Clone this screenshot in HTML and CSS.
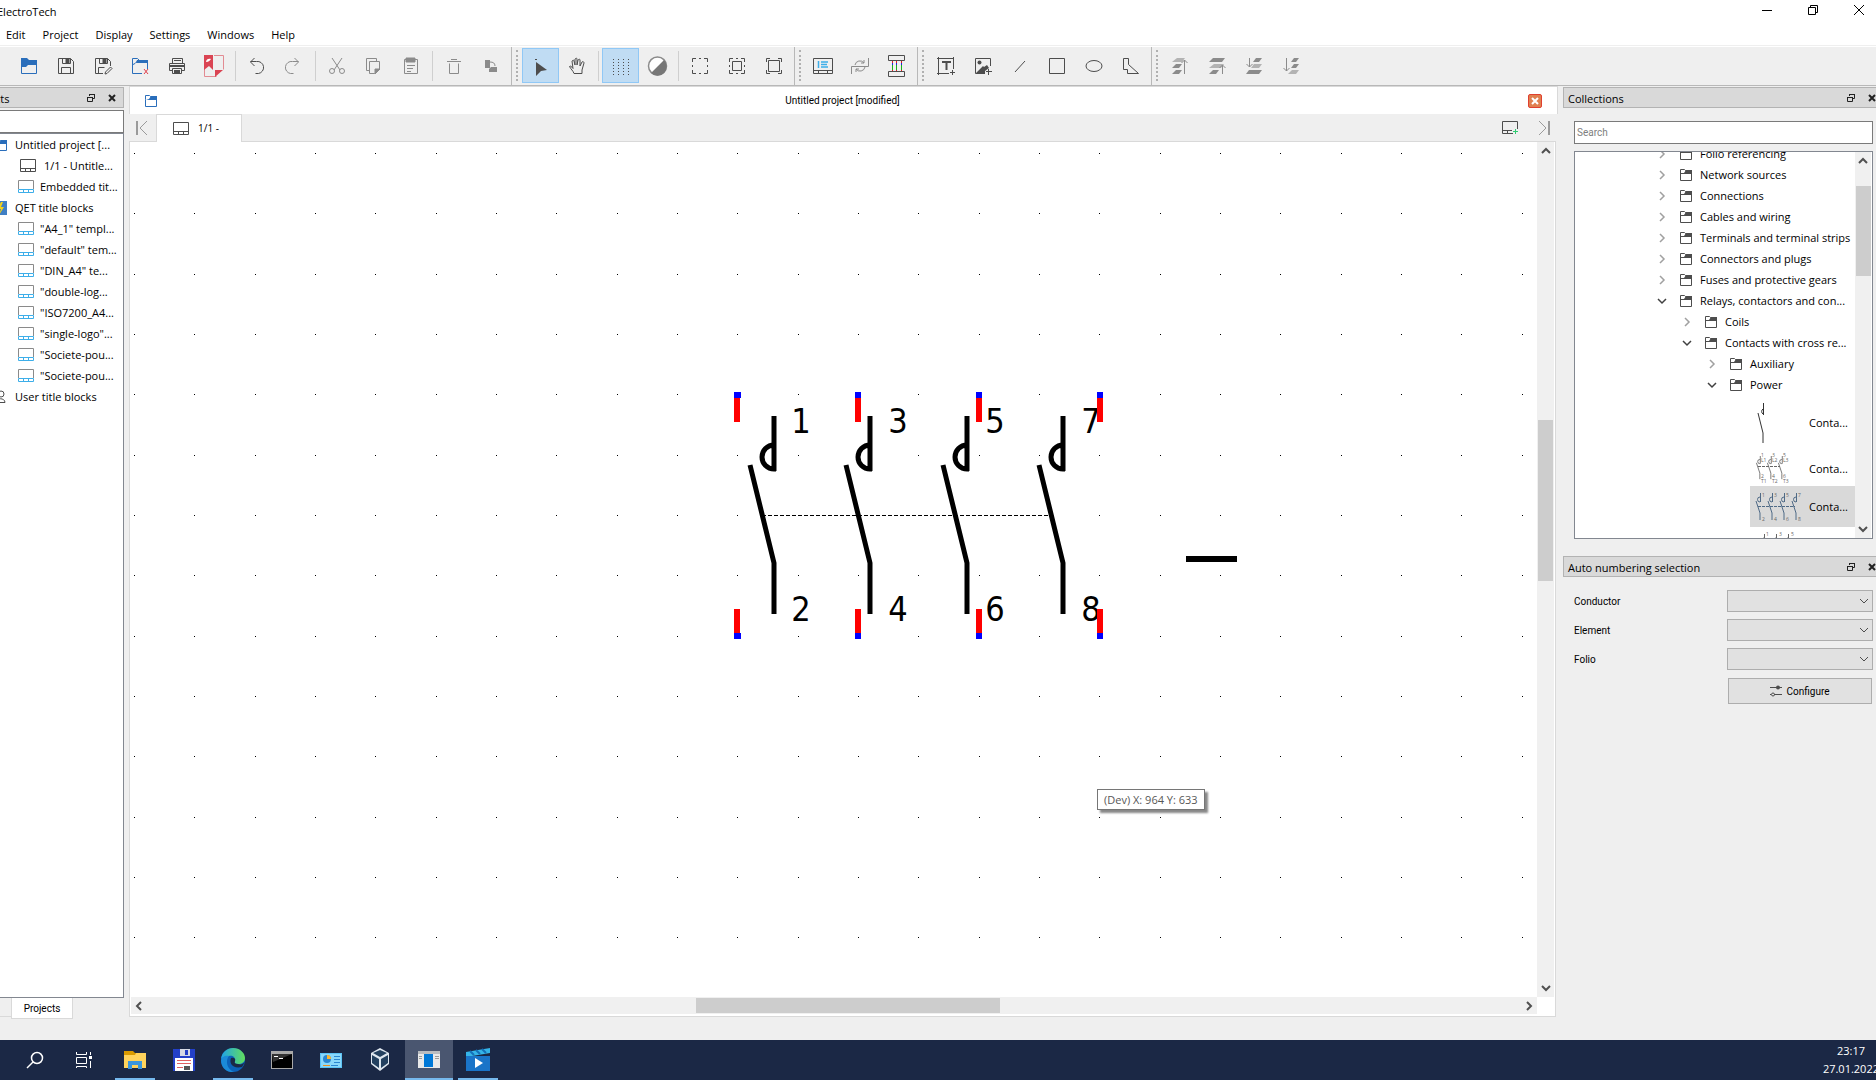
FILE: index.html
```html
<!DOCTYPE html>
<html lang="en">
<head>
  <meta charset="UTF-8" />
  <meta name="viewport" content="width=device-width, initial-scale=1.0" />
  <title>ElectroTech</title>
  <link rel="stylesheet" href="styles.css">
</head>
<body>
  <!-- shared icons -->
  <svg class="defs" aria-hidden="true">
    <symbol id="folder" viewBox="0 0 12 12">
      <path d="M.5 .5h4l1 1h6v10H.5zM.5 4.500h11" fill="none" stroke="currentColor"/>
      <path d="M4 4l2-3h6v3z" fill="currentColor"/>
    </symbol>
    <symbol id="folder-blue" viewBox="0 0 12 12">
      <path d="M.5 4.500V.5h4l1 1h6v10H.5z" fill="none" stroke="#2a6ebb"/>
      <path d="M1 5l3-1 2-3h6v4z" fill="#2a6ebb"/>
    </symbol>
    <symbol id="sheet" viewBox="0 0 16 14">
      <path d="M.5 .5h15v12H.5zM.5 9.500h15M5.500 10v2M10.500 10v2" fill="none" stroke="#4d4d4d"/>
    </symbol>
    <symbol id="template" viewBox="0 0 16 14">
      <path d="M.5 9V.5h15V9" fill="none" stroke="#8a8a8a"/>
      <path d="M.5 9.500h15v3H.5zM5.500 10v2M10.500 10v2" fill="none" stroke="#3daee9"/>
    </symbol>
    <symbol id="float" viewBox="0 0 10 10">
      <path d="M3.500 3V1.500h5v4H7M1.500 4.500h5v4h-5z" fill="none" stroke="#222"/>
      <path d="M3 1h6v1H3zM1 4h6v1H1z" fill="#222"/>
    </symbol>
    <symbol id="cross" viewBox="0 0 10 10">
      <path d="M2 2l6 6M8 2L2 8" stroke="#222" stroke-width="2"/>
    </symbol>
    <symbol id="right" viewBox="0 0 10 10">
      <path d="M3 1l4 4-4 4" fill="none" stroke="currentColor" stroke-width="1.500"/>
    </symbol>
    <symbol id="down" viewBox="0 0 10 10">
      <path d="M1 3l4 4 4-4" fill="none" stroke="currentColor" stroke-width="1.500"/>
    </symbol>
    <symbol id="pole" viewBox="-30 270 40 210" overflow="visible">
      <path d="M0 274v55M2 303h-2a12 12 0 0 0 0 24h2M-24 323L0 421v51" fill="none" stroke="currentColor" stroke-width="5"/>
    </symbol>
    <symbol id="mini" viewBox="0 0 8 28">
      <path d="M5.500 0v9M5 4a2 2 0 0 0 0 5" fill="none" stroke="currentColor"/>
      <path d="M1 8l4 12v7" fill="none" stroke="currentColor"/>
    </symbol>
  </svg>

  <header class="titlebar">
    <span class="title">ElectroTech</span>
    <div class="window-buttons">
      <button aria-label="Minimize"><svg width="10" height="10"><path d="M0 5.500h10"/></svg></button>
      <button aria-label="Restore"><svg width="10" height="10"><path d="M.5 2.500h7v7h-7zM2.500 2V.5h7v7H8"/></svg></button>
      <button aria-label="Close"><svg width="10" height="10"><path d="M0 0l10 10M10 0L0 10"/></svg></button>
    </div>
  </header>

  <nav class="menubar">
    <a href="#">Edit</a>
    <a href="#">Project</a>
    <a href="#">Display</a>
    <a href="#">Settings</a>
    <a href="#">Windows</a>
    <a href="#">Help</a>
  </nav>

  <div class="toolbar">
    <div class="group first">
      <button aria-label="New"><svg><path d="M4.500 9.500v10h15v-10" stroke="#2a6ebb"/><path d="M4 4h6l2 2h8v5h-9l-2 2H4z" fill="#2a6ebb" stroke="none"/></svg></button>
      <button aria-label="Save"><svg><path d="M4.500 4.500h12l3 3v12h-15zM8.500 4.500v5h8v-5M7.500 19.500v-6h9v6"/><path d="M12 5h3v4h-3z" fill="#4d4d4d"/></svg></button>
      <button aria-label="Save as"><svg><path d="M12 19.500H4.500v-15h12l3 3V12M8.500 4.500v5h8v-5M7.500 19.500v-6h6"/><path d="M12 5h3v4h-3z" fill="#4d4d4d"/><path d="M14.500 18l5-5 1.500 1.500-5 5-2 .5z"/></svg></button>
      <button aria-label="Close project"><svg><path d="M14 19.500H4.500v-15h5l2 2h8V15M5 10.500l2-1 3-3" stroke="#2a6ebb"/><path d="M9 6h11v3H8z" fill="#2a6ebb" stroke="none"/><path d="M16 15l4 5M20 15l-4 5" stroke="#e0404c"/></svg></button>
      <button aria-label="Print"><svg><path d="M7.500 9V4.500h10V9M4.500 9.500h15v7h-15z"/><path d="M4 11h16v2H4zM9 6h7v1H9z" fill="#4d4d4d" stroke="none"/><path d="M7.500 14.500h9v5h-9z" fill="#efefef"/><path d="M9 16h6v3H9z" fill="#4d4d4d" stroke="none"/></svg></button>
      <button aria-label="Export PDF"><svg><path d="M12 1.500h9.500v14M2.500 15v7.500h12" stroke="#e28b92"/><path d="M2 1h9v15l-4-4-5 4zM13 16h8l-8 7z" fill="#da4453" stroke="none"/><path d="M4 8c0-3 3-4 5-3-1 1-2 3-5 3z" fill="#fff" stroke="none"/></svg></button>
      <i class="sep"></i>
      <button aria-label="Undo"><svg><path d="M9.500 4L5.500 8l4 4M5.500 7.500h6a6 6 0 0 1 2 12h-3" /></svg></button>
      <button aria-label="Redo" class="off"><svg><path d="M12.500 4l4 4-4 4M16.500 7.500h-6a6 6 0 0 0-2 12h3" /></svg></button>
      <i class="sep"></i>
      <button aria-label="Cut" class="off"><svg><path d="M7 4l8 12M17 4L9 16"/><circle cx="7" cy="17" r="2.500"/><circle cx="17" cy="17" r="2.500"/></svg></button>
      <button aria-label="Copy" class="off"><svg><path d="M7 16.500H4.500v-12h10V7M7.500 7.500h10V15l-5 4.500h-5z"/><path d="M13 15h5l-5 5z" fill="#8b8b8b"/></svg></button>
      <button aria-label="Paste" class="off"><svg><path d="M5.500 5.500h13v14h-13zM8 11.500h8M8 14.500h6M8 17.500h4"/><path d="M7 4h9v4H7z" fill="#8b8b8b"/></svg></button>
      <i class="sep"></i>
      <button aria-label="Delete" class="off"><svg><path d="M5 7.500h14M9 5.500h6M7.500 9.500v10h9v-10"/></svg></button>
      <button aria-label="Rotate" class="off"><svg><path d="M6 6h5v8H6zM12 13h6v5h-8v-3z" fill="#8b8b8b" stroke="none"/><path d="M11 8c3 0 5 1 5 4"/></svg></button>
    </div>

    <div class="group">
      <button aria-label="Select" class="on"><svg><path d="M8 8l11 8-6 1-5 5z" fill="#4d4d4d" stroke="none"/><path d="M7 5.500h2"/></svg></button>
      <button aria-label="Pan"><svg><path d="M9 19.500c-1-3-3-4-4.500-7 1-1 2 0 3.500 2L7 7c1-1 2-1 2 0l1 4V5c1-1 2-1 2 0v6l1-5c1-1 2-1 2 0v6l2-4c1-1 2 0 2 1l-2 7v3.500z"/></svg></button>
      <i class="sep"></i>
      <button aria-label="Grid" class="on"><svg><path d="M5.500 5v16M10.500 5v16M15.500 5v16M20.500 5v16" stroke-dasharray="1 2"/></svg></button>
      <button aria-label="Background"><svg><circle cx="12.500" cy="12" r="9" fill="#fff" stroke="#8b8b8b" stroke-width="1.500"/><path d="M19 6a9 9 0 0 1-13 13z" fill="#777" stroke="none"/></svg></button>
      <i class="sep"></i>
      <button aria-label="Select none"><svg><path d="M4.500 8V4.500H8M16 4.500h3.500V8M19.500 16v3.500H16M8 19.500H4.500V16M11 4.500h2M11 19.500h2M4.500 11v2M19.500 11v2"/></svg></button>
      <button aria-label="Invert selection"><svg><path d="M4.500 8V4.500H8M16 4.500h3.500V8M19.500 16v3.500H16M8 19.500H4.500V16M11 4.500h2M11 19.500h2M4.500 11v2M19.500 11v2M7.500 7.500h9v9h-9z"/></svg></button>
      <button aria-label="Select all"><svg><path d="M4.500 8V4.500H8M16 4.500h3.500V8M19.500 16v3.500H16M8 19.500H4.500V16M6.500 6.500h11v11h-11z"/></svg></button>
    </div>

    <div class="group">
      <button aria-label="Folio properties"><svg><path d="M2.500 4.500h19v15h-19zM3 16.500h18M7.500 17v2M16.500 17v2"/><path d="M7.500 7v7M10 8h7M10 10.500h6M10 13h7" stroke="#3daee9" stroke-width="1.500"/></svg></button>
      <button aria-label="Reset conductor" class="off"><svg><path d="M3.500 20v-7.500h17V4"/><path d="M7 11a5 5 0 0 1 9-2M17 13a5 5 0 0 1-9 2M16 6v3h-3M8 18v-3h3"/></svg></button>
      <button aria-label="Terminal strip"><svg><path d="M3.500 1.500h16v5h-16zM3.500 17.500h16v5h-16z"/><path d="M7.500 7v10M11.500 7v10M16.500 7v10" stroke="#e02020"/><path d="M7.500 9v6M11.500 9v6M16.500 9v6" stroke="#2020e0"/><path d="M7.500 11v5M11.500 11v5M16.500 11v5" stroke="#18b018"/></svg></button>
    </div>

    <div class="group">
      <button aria-label="Add text"><svg><path d="M3 4.500h17M4.500 3v18M19.500 3v12M3 19.500h12M16 18.500h5M18.500 16v5"/><path d="M8 8h9M12.500 8v8" stroke-width="2"/></svg></button>
      <button aria-label="Add picture"><svg><path d="M19.500 12V4.500h-15v15H14M15 17.500h6M17.500 15v6"/><path d="M5 19l7-7 1 1 3-2 2 3-4 3v2z" fill="#4d4d4d" stroke="none"/><circle cx="8.500" cy="8.500" r="2" fill="#4d4d4d" stroke="none"/></svg></button>
      <button aria-label="Add line"><svg><path d="M7 18L17 7"/></svg></button>
      <button aria-label="Add rectangle"><svg><path d="M4.500 4.500h15v15h-15z"/></svg></button>
      <button aria-label="Add ellipse"><svg><ellipse cx="12" cy="12" rx="8" ry="5.500"/></svg></button>
      <button aria-label="Add polygon"><svg><path d="M4.500 4.500h5v6l10 9h-11v-4h-4z"/></svg></button>
    </div>

    <div class="group last">
      <button aria-label="Bring to front" class="off"><svg fill="#8b8b8b"><path d="M9 4h8l-3 4H4z" opacity=".6" stroke="none"/><path d="M8 10h6l-3 4H4zM8 16h6l-3 4H4z" stroke="none"/><path d="M16.500 20V6M13.500 9l3-3 3 3" fill="none"/></svg></button>
      <button aria-label="Raise" class="off"><svg fill="#8b8b8b"><path d="M9 10h10l-3 4H4z" opacity=".6" stroke="none"/><path d="M8 4h12l-3 4H4zM8 16h6l-3 4H4z" stroke="none"/><path d="M17.500 20v-9M14.500 14l3-3 3 3" fill="none"/></svg></button>
      <button aria-label="Lower" class="off"><svg fill="#8b8b8b"><path d="M12 10h8l-3 4H9z" opacity=".6" stroke="none"/><path d="M14 4h6l-3 4h-6zM7 16h13l-3 4H4z" stroke="none"/><path d="M7.500 4v9M4.500 10l3 3 3-3" fill="none"/></svg></button>
      <button aria-label="Send to back" class="off"><svg fill="#8b8b8b"><path d="M13 16h7l-3 4H9z" opacity=".6" stroke="none"/><path d="M15 4h5l-3 4h-5zM15 10h5l-3 4h-5z" stroke="none"/><path d="M7.500 4v13M4.500 14l3 3 3-3" fill="none"/></svg></button>
    </div>
  </div>

  <main class="workspace">
    <aside class="projects">
      <div class="dock-head cut">
        <h2>cts</h2>
        <svg width="10" height="10"><use href="#float"/></svg>
        <svg width="10" height="10"><use href="#cross"/></svg>
      </div>
      <input class="filter" type="text" aria-label="Filter projects">
      <ul class="project-list">
        <li class="root"><svg width="12" height="12"><use href="#folder-blue"/></svg>Untitled project [...</li>
        <li class="folio"><svg width="16" height="14"><use href="#sheet"/></svg>1/1 - Untitle...</li>
        <li><svg width="16" height="14"><use href="#template"/></svg>Embedded tit...</li>
        <li class="root"><svg width="12" height="14"><path d="M0 0h12v14H0z" fill="#3f7fc4"/><path d="M6 1L2 8h4l-2 6 5-8H6l2-5z" fill="#f2d21b"/></svg>QET title blocks</li>
        <li><svg width="16" height="14"><use href="#template"/></svg>"A4_1" templ...</li>
        <li><svg width="16" height="14"><use href="#template"/></svg>"default" tem...</li>
        <li><svg width="16" height="14"><use href="#template"/></svg>"DIN_A4" te...</li>
        <li><svg width="16" height="14"><use href="#template"/></svg>"double-log...</li>
        <li><svg width="16" height="14"><use href="#template"/></svg>"ISO7200_A4...</li>
        <li><svg width="16" height="14"><use href="#template"/></svg>"single-logo"...</li>
        <li><svg width="16" height="14"><use href="#template"/></svg>"Societe-pou...</li>
        <li><svg width="16" height="14"><use href="#template"/></svg>"Societe-pou...</li>
        <li class="root"><svg width="12" height="14"><circle cx="6" cy="4" r="3" fill="none" stroke="#4d4d4d"/><path d="M1 12.500c0-5 9-5 9 0z" fill="none" stroke="#4d4d4d"/></svg>User title blocks</li>
      </ul>
      <div class="dock-tabs"><i></i><button>Projects</button></div>
    </aside>

    <section class="editor">
      <div class="project-head">
        <svg width="12" height="12"><use href="#folder-blue"/></svg>
        <span>Untitled project [modified]</span>
        <button class="close-project" aria-label="Close project"><svg width="8" height="8"><path d="M1 1l6 6M7 1L1 7" stroke="#fff" stroke-width="2"/></svg></button>
      </div>
      <div class="folio-tabs">
        <button class="jump" aria-label="First folio"><svg width="12" height="16"><path d="M1 1v14" stroke-width="2"/><path d="M11 1L4 8l7 7"/></svg></button>
        <button class="folio-tab"><svg width="16" height="14"><use href="#sheet"/></svg>1/1 -</button>
        <span class="fill"></span>
        <button class="add" aria-label="Add folio"><svg width="17" height="14"><path d="M11 12.500H.5V.5h15V8M.5 9.500H10M5.500 10v2" stroke="#4d4d4d"/><path d="M11 10.500h5M13.500 8v5" stroke="#2ecc71"/></svg></button>
        <button class="jump" aria-label="Last folio"><svg width="12" height="16"><path d="M11 1v14" stroke-width="2"/><path d="M1 1l7 7-7 7"/></svg></button>
      </div>
      <div class="view">
        <div class="canvas">
          <svg class="drawing">
            <defs>
              <pattern id="grid" x="3" y="11" width="181" height="181" patternUnits="userSpaceOnUse">
                <path d="M0 .5h1M60 .5h1M121 .5h1M0 60.500h1M60 60.500h1M121 60.500h1M0 121.500h1M60 121.500h1M121 121.500h1" stroke="#000"/>
              </pattern>
            </defs>
            <rect width="100%" height="100%" fill="url(#grid)"/>
            <path d="M631 373.500h288" stroke="#000" stroke-dasharray="4 2"/>
            <use href="#pole" x="613" y="270" width="40" height="210"/>
            <use href="#pole" x="709" y="270" width="40" height="210"/>
            <use href="#pole" x="806" y="270" width="40" height="210"/>
            <use href="#pole" x="902" y="270" width="40" height="210"/>
            <g class="marks">
              <text x="670" y="291">1</text><text x="670" y="479">2</text>
              <text x="767" y="291">3</text><text x="767" y="479">4</text>
              <text x="864" y="291">5</text><text x="864" y="479">6</text>
              <text x="960" y="291">7</text><text x="960" y="479">8</text>
            </g>
            <path d="M606 256v24M727 256v24M848 256v24M969 256v24M606 467v24M727 467v24M848 467v24M969 467v24" stroke="#f00" stroke-width="6"/>
            <path d="M603 253h7M724 253h6M845 253h6M966 253h6M603 494h7M724 494h6M845 494h6M966 494h6" stroke="#00f" stroke-width="6"/>
            <path d="M1055 417h51" stroke="#000" stroke-width="6"/>
          </svg>
          <div class="tooltip">(Dev) X: 964 Y: 633</div>
        </div>
        <div class="vbar">
          <svg width="10" height="10"><path d="M1 7l4-4 4 4"/></svg>
          <i></i>
          <svg width="10" height="10"><path d="M1 3l4 4 4-4"/></svg>
        </div>
        <div class="hbar">
          <svg width="10" height="10"><path d="M7 1L3 5l4 4"/></svg>
          <i></i>
          <svg width="10" height="10"><path d="M3 1l4 4-4 4"/></svg>
        </div>
      </div>
    </section>

    <aside class="side">
      <div class="dock-head">
        <h2>Collections</h2>
        <svg width="10" height="10"><use href="#float"/></svg>
        <svg width="10" height="10"><use href="#cross"/></svg>
      </div>
      <div class="collections">
        <input class="search" type="text" placeholder="Search" aria-label="Search">
        <div class="tree-box">
          <ul class="tree">
            <li><svg class="arrow"><use href="#right"/></svg><svg class="dir"><use href="#folder"/></svg>Folio referencing</li>
            <li><svg class="arrow"><use href="#right"/></svg><svg class="dir"><use href="#folder"/></svg>Network sources</li>
            <li><svg class="arrow"><use href="#right"/></svg><svg class="dir"><use href="#folder"/></svg>Connections</li>
            <li><svg class="arrow"><use href="#right"/></svg><svg class="dir"><use href="#folder"/></svg>Cables and wiring</li>
            <li><svg class="arrow"><use href="#right"/></svg><svg class="dir"><use href="#folder"/></svg>Terminals and terminal strips</li>
            <li><svg class="arrow"><use href="#right"/></svg><svg class="dir"><use href="#folder"/></svg>Connectors and plugs</li>
            <li><svg class="arrow"><use href="#right"/></svg><svg class="dir"><use href="#folder"/></svg>Fuses and protective gears</li>
            <li><svg class="arrow open"><use href="#down"/></svg><svg class="dir"><use href="#folder"/></svg>Relays, contactors and con...</li>
            <li class="l2"><svg class="arrow"><use href="#right"/></svg><svg class="dir"><use href="#folder"/></svg>Coils</li>
            <li class="l2"><svg class="arrow open"><use href="#down"/></svg><svg class="dir"><use href="#folder"/></svg>Contacts with cross re...</li>
            <li class="l3"><svg class="arrow"><use href="#right"/></svg><svg class="dir"><use href="#folder"/></svg>Auxiliary</li>
            <li class="l3"><svg class="arrow open"><use href="#down"/></svg><svg class="dir"><use href="#folder"/></svg>Power</li>
            <li class="part tall">
              <svg width="48" height="42"><path d="M8.500 1v12M8 7a3 3 0 0 0 0 5M3 11l5 20v10" fill="none" stroke="#333"/></svg>Conta...
            </li>
            <li class="part short">
              <svg width="48" height="32"><use href="#mini" x="0" y="4" width="8" height="24"/><use href="#mini" x="11" y="4" width="8" height="24"/><use href="#mini" x="22" y="4" width="8" height="24"/><path d="M3 14.500h22" stroke="currentColor" stroke-dasharray="3 1"/>
                <g><text x="6" y="5">1</text><text x="17" y="5">3</text><text x="28" y="5">5</text><text x="6" y="10">L1</text><text x="17" y="10">L2</text><text x="28" y="10">L3</text><text x="6" y="26">2</text><text x="17" y="26">4</text><text x="28" y="26">6</text><text x="6" y="31">T1</text><text x="17" y="31">T2</text><text x="28" y="31">T3</text></g></svg>Conta...
            </li>
            <li class="part selected">
              <svg width="48" height="32"><use href="#mini" x="0" y="2" width="8" height="28"/><use href="#mini" x="12" y="2" width="8" height="28"/><use href="#mini" x="24" y="2" width="8" height="28"/><use href="#mini" x="36" y="2" width="8" height="28"/><path d="M3 15.500h37" stroke="currentColor" stroke-dasharray="3 1"/>
                <g><text x="7" y="6">1</text><text x="19" y="6">3</text><text x="31" y="6">5</text><text x="43" y="6">7</text><text x="7" y="30">2</text><text x="19" y="30">4</text><text x="31" y="30">6</text><text x="43" y="30">8</text></g></svg>Conta...
            </li>
            <li class="part">
              <svg width="48" height="32"><use href="#mini" x="4" y="2" width="8" height="28"/><use href="#mini" x="16" y="2" width="8" height="28"/><use href="#mini" x="28" y="2" width="8" height="28"/>
                <g><text x="11" y="4">1</text><text x="24" y="4">3</text><text x="36" y="4">5</text></g></svg>
            </li>
          </ul>
          <div class="vbar slim">
            <svg width="10" height="10"><path d="M1 7l4-4 4 4"/></svg>
            <i></i>
            <svg width="10" height="10"><path d="M1 3l4 4 4-4"/></svg>
          </div>
        </div>
      </div>

      <div class="dock-head">
        <h2>Auto numbering selection</h2>
        <svg width="10" height="10"><use href="#float"/></svg>
        <svg width="10" height="10"><use href="#cross"/></svg>
      </div>
      <form class="numbering">
        <label for="conductor">Conductor</label>
        <div class="combo"><select id="conductor"></select><svg width="10" height="10"><path d="M1 3l4 4 4-4" fill="none" stroke="#4d4d4d"/></svg></div>
        <label for="element">Element</label>
        <div class="combo"><select id="element"></select><svg width="10" height="10"><path d="M1 3l4 4 4-4" fill="none" stroke="#4d4d4d"/></svg></div>
        <label for="folio">Folio</label>
        <div class="combo"><select id="folio"></select><svg width="10" height="10"><path d="M1 3l4 4 4-4" fill="none" stroke="#4d4d4d"/></svg></div>
        <button type="button" class="configure"><svg width="12" height="12"><path d="M0 2.500h12M4 9.500h8M0 9.500h1" stroke="#4d4d4d"/><circle cx="8" cy="2.500" r="2" fill="#4d4d4d"/><circle cx="3" cy="9.500" r="1.500" fill="none" stroke="#4d4d4d"/></svg>Configure</button>
      </form>
    </aside>
  </main>

  <footer class="taskbar">
    <button aria-label="Search"><svg><path d="M4 20l6-6" stroke="#fff" stroke-width="1.500"/><circle cx="14" cy="10" r="5.500" fill="none" stroke="#fff" stroke-width="1.500"/></svg></button>
    <button aria-label="Task view"><svg><path d="M4.500 4v2.500h10V4M4.500 9.500h10v6h-10zM4.500 20v-1.500h10V20M18.500 4v3M18.500 13v7" fill="none" stroke="#fff"/><path d="M17 8h3v3h-3z" fill="#fff"/></svg></button>
    <i class="gap"></i>
    <button aria-label="Explorer" class="running"><svg><path d="M1 3h9l2 2h10v4H1z" fill="#d99a00"/><path d="M1 7h11l1-2h10v15H1z" fill="#ffd35c"/><path d="M5 21v-8h14v8h-4v-4H9v4z" fill="#3a96dd"/></svg></button>
    <button aria-label="Commander"><svg><path d="M1 1h22v22H1z" fill="#2340c8"/><path d="M8 1h10v7H8z" fill="#d5d9e4"/><path d="M13 2h3v5h-3z" fill="#2340c8"/><path d="M3 10h18v13H3z" fill="#fff"/><path d="M5 12.500h14M5 15.500h14M5 19.500h6" stroke="#e06060"/><path d="M12 18h6v4h-6z" fill="#555"/></svg></button>
    <button aria-label="Edge" class="running"><svg><defs><linearGradient id="edge" x1="0" x2="1"><stop offset="0" stop-color="#1fa2e8"/><stop offset="1" stop-color="#62de5c"/></linearGradient></defs><circle cx="12" cy="12" r="12" fill="#0c62b8"/><path d="M0 11C1 4 6 0 12 0c7 0 12 5 12 10 0 4-3 6-7 6-3 0-4-1-3-3 1-4-3-6-6-5-4 0-7 2-8 3z" fill="url(#edge)"/><path d="M8 8c-4 5-2 13 5 16-7 1-13-4-13-12 1-3 4-5 8-4z" fill="#1b8ad8"/><path d="M10 10c-2 5 1 11 11 9l3-5c-2 2-4 3-7 2-3 0-4-1-3-3 1-2-1-4-4-3z" fill="#1b2845"/></svg></button>
    <button aria-label="Console"><svg><path d="M1 3h22v18H1z" fill="#a8a8a8"/><path d="M2 6h20v14H2z" fill="#000"/><path d="M2 6h20L3 14z" fill="#333"/><path d="M4 8.500h4M9 10.500h4" stroke="#fff"/></svg></button>
    <button aria-label="Control panel"><svg><path d="M1 5h22v15H1z" fill="#5cc3f5"/><path d="M2 6h20v13H2z" fill="#8ad8fa"/><circle cx="8" cy="11" r="4" fill="#2a86d0"/><path d="M8 11V7a4 4 0 0 1 4 4z" fill="#ffb52e"/><path d="M15 8.500h6M15 11.500h6M15 14.500h6" stroke="#2a86d0"/><path d="M4 17.500h7" stroke="#e89020"/><path d="M12 17.500h7" stroke="#2a86d0"/></svg></button>
    <button aria-label="Virtual machine"><svg><path d="M12 0l9 5v11l-9 7-9-7V5z" fill="#dfe7ef"/><path d="M12 2l7 3-7 4-7-4zM4 7l7 4v9l-7-5zM20 7l-7 4v9l7-5z" fill="#23405f"/></svg></button>
    <button aria-label="Window" class="running current"><svg><path d="M1 4h22v16H1z" fill="#e9e9e9"/><path d="M1 3h22v3H1z" fill="#b9bcc0"/><path d="M7 6h9v13H7z" fill="#0078d7"/><path d="M2 8.500h3M2 10.500h3M18 8.500h4M18 10.500h4" stroke="#999"/></svg></button>
    <button aria-label="Video" class="running"><svg><path d="M0 4l24-4v5L0 9z" fill="#35b4e8"/><path d="M4 3l4 4M10 2l4 4M16 1l4 4" stroke="#1470b8" stroke-width="2"/><path d="M0 8h24v15H0z" fill="#1a74c8"/><path d="M9 10l8 5-8 5z" fill="#fff"/></svg></button>
    <div class="clock"><span>23:17</span><span>27.01.2022</span></div>
  </footer>
</body>
</html>
```
FILE: styles.css
```css
* {
  margin: 0;
  padding: 0;
  box-sizing: border-box;
}

body {
  height: 100vh;
  display: flex;
  flex-direction: column;
  overflow: hidden;
  background: #efefef;
  color: #000;
  font: 11px/21px 'Open Sans', sans-serif;
}

button, input, select {
  font: inherit;
  color: inherit;
  background: none;
  border: none;
  border-radius: 0;
}

ul {
  list-style: none;
}

svg {
  display: block;
  flex: none;
}

.defs {
  position: absolute;
  width: 0;
  height: 0;
}

/* title and menu */
.titlebar {
  display: flex;
  height: 24px;
  background: #fff;
}

.title {
  margin-left: -3px;
  line-height: 24px;
}

.window-buttons {
  display: flex;
  margin-left: auto;
  margin-right: -6px;
}

.window-buttons button {
  display: grid;
  width: 46px;
  height: 20px;
  place-items: center;
}

.window-buttons path {
  fill: none;
  stroke: #000;
}

.menubar {
  display: flex;
  gap: 17px;
  height: 22px;
  padding-left: 6px;
  background: #fff;
  border-bottom: 1px solid #efefef;
}

.menubar a {
  color: #000;
  text-decoration: none;
}

/* toolbar */
.toolbar {
  display: flex;
  height: 40px;
  border-top: 1px solid #fff;
  border-bottom: 1px solid #b8b8b8;
}

.group {
  position: relative;
  display: flex;
  padding: 1px 1px 2px 10px;
  border-right: 1px solid #b8b8b8;
}

.group.first {
  padding-left: 11px;
}

.group.last {
  border-right: none;
}

.group:not(.first)::before {
  content: "";
  position: absolute;
  left: 4px;
  top: 3px;
  bottom: 4px;
  border-left: 2px dotted #b0b0b0;
}

.group button {
  width: 37px;
  height: 35px;
  padding: 6px;
}

.group button.on {
  padding: 5px;
  background: #c0dcf3;
  border: 1px solid #90c8f6;
}

.group svg {
  width: 24px;
  height: 24px;
  stroke: #4d4d4d;
  fill: none;
}

.group .off svg {
  stroke: #8b8b8b;
}

.group .off svg[fill] {
  fill: #8b8b8b;
}

.sep {
  width: 1px;
  margin: 3px 3px 2px 2px;
  background: #cfcfcf;
}

/* main area */
.workspace {
  display: flex;
  flex: 1;
  min-height: 0;
  padding-bottom: 21px;
}

.dock-head {
  display: flex;
  align-items: center;
  gap: 11px;
  height: 21px;
  padding-left: 4px;
  background: #d9d9d9;
  border: 1px solid #b3b3b3;
}

.dock-head.cut {
  padding: 0 6px 0 0;
  border-left: none;
}

.cut h2 {
  margin-left: -5px;
}

.dock-head h2 {
  flex: 1;
  padding-top: 1px;
  font-size: 11px;
  font-weight: normal;
}

/* projects dock */
.projects {
  display: flex;
  flex-direction: column;
  width: 124px;
  padding-top: 1px;
}

.filter {
  height: 23px;
  margin-top: 2px;
  border: 1px solid #7a7a7a;
  border-left: none;
  background: #fff;
}

.project-list {
  flex: 1;
  border: 1px solid #828790;
  border-left: none;
  background: #fff;
}

.project-list li {
  display: flex;
  align-items: center;
  gap: 6px;
  height: 21px;
  padding-left: 18px;
  white-space: nowrap;
}

.project-list .root {
  gap: 8px;
  padding-left: 0;
}

.root svg {
  margin-left: -5px;
}

.project-list .folio {
  gap: 8px;
  padding-left: 20px;
}

.dock-tabs {
  display: flex;
  height: 21px;
}

.dock-tabs i {
  width: 11px;
  height: 19px;
  border-bottom: 1px solid #d9d9d9;
}

.dock-tabs button {
  width: 62px;
  font-family: Roboto, sans-serif;
  font-size: 10px;
  background: #fff;
  border: 1px solid #d9d9d9;
  border-top: none;
}

/* editor */
.editor {
  display: flex;
  flex: 1;
  flex-direction: column;
  min-width: 0;
  margin: 0 5px 2px;
}

.project-head {
  display: flex;
  align-items: center;
  justify-content: space-between;
  height: 28px;
  padding: 0 15px;
  background: #fff;
  border: 1px solid #d9d9d9;
  border-bottom: none;
  font-family: Roboto, sans-serif;
  font-size: 10px;
}

.close-project {
  display: grid;
  width: 14px;
  height: 14px;
  place-items: center;
  background: #e08050;
  border: 1px solid #e04030;
  border-radius: 2px;
}

.folio-tabs {
  display: flex;
  align-items: center;
  height: 28px;
  margin-right: 2px;
  border-bottom: 1px solid #d9d9d9;
}

.jump {
  width: 27px;
  padding-left: 7px;
}

.jump:last-child {
  padding-left: 9px;
}

.jump path {
  fill: none;
  stroke: #9a9a9a;
}

.folio-tab {
  display: flex;
  align-items: center;
  gap: 9px;
  width: 86px;
  height: 28px;
  margin-bottom: -1px;
  padding-left: 16px;
  background: #fff;
  border: 1px solid #d9d9d9;
  border-bottom: none;
  font-size: 10px;
}

.fill {
  flex: 1;
}

.add {
  width: 27px;
}

.add path {
  fill: none;
}

.view {
  display: grid;
  flex: 1;
  grid-template: 1fr 17px / 1fr 17px;
  min-height: 0;
  margin-right: 2px;
  padding: 0 1px 2px 1px;
  background: #fff;
  border: 1px solid #d9d9d9;
  border-top: none;
}

.canvas {
  position: relative;
  overflow: hidden;
}

.drawing {
  position: absolute;
  width: 100%;
  height: 100%;
}

.marks {
  font: 34px 'DejaVu Sans Condensed', 'DejaVu Sans', sans-serif;
  text-anchor: middle;
}

.tooltip {
  position: absolute;
  left: 966px;
  top: 647px;
  padding: 0 6px;
  line-height: 19px;
  color: #575757;
  background: #fff;
  border: 1px solid #767676;
  box-shadow: 3px 3px 2px #888;
}

.vbar, .hbar {
  display: flex;
  align-items: center;
  background: #f0f0f0;
}

.vbar {
  flex-direction: column;
  padding: 4px 0;
}

.hbar {
  padding: 0 3px;
}

.vbar path, .hbar path {
  fill: none;
  stroke: #505050;
  stroke-width: 2;
}

.vbar i {
  width: 15px;
  height: 161px;
  margin: 264px 0 auto;
  background: #cdcdcd;
}

.hbar i {
  width: 304px;
  height: 15px;
  margin: 0 auto 0 552px;
  background: #cdcdcd;
}

/* right docks */
.side {
  display: flex;
  flex-direction: column;
  width: 313px;
  padding-top: 1px;
}

.side .dock-head {
  margin-right: -2px;
}

.collections {
  padding: 13px 3px 17px 11px;
}

.search {
  display: block;
  width: 100%;
  height: 23px;
  padding-left: 2px;
  font-family: Roboto, sans-serif;
  font-size: 10px;
  background: #fff;
  border: 1px solid #7a7a7a;
}

.search::placeholder {
  color: #808080;
}

.tree-box {
  display: flex;
  height: 388px;
  margin-top: 7px;
  background: #fff;
  border: 1px solid #828790;
  overflow: hidden;
}

.tree {
  flex: 1;
  margin-top: -9px;
}

.tree li {
  display: flex;
  align-items: center;
  height: 21px;
  padding-left: 82px;
  white-space: nowrap;
}

.tree .l2 {
  padding-left: 107px;
}

.tree .l3 {
  padding-left: 132px;
}

.arrow {
  width: 10px;
  height: 10px;
  margin-right: 13px;
  color: #a0a0a0;
}

.arrow.open {
  color: #404040;
}

.dir {
  width: 12px;
  height: 12px;
  margin-right: 8px;
  color: #4d4d4d;
}

.tree .part {
  gap: 6px;
  height: 41px;
  margin-left: 175px;
  padding-left: 5px;
}

.tree .tall {
  height: 55px;
}

.tree .short {
  height: 36px;
}

.part svg {
  color: #666;
}

.part text {
  font-size: 5px;
  fill: #666;
}

.selected {
  background: #d9d9d9;
}

.part.selected svg {
  color: #4f6a86;
}

.slim {
  width: 17px;
  border-right: 1px solid #fff;
}

.slim i {
  height: 90px;
  margin-top: 20px;
}

.numbering {
  display: grid;
  grid-template-columns: 1fr 146px;
  gap: 7px 0;
  align-items: center;
  padding: 13px 3px 0 11px;
  font-family: Roboto, sans-serif;
  font-size: 10px;
}

.combo {
  position: relative;
  height: 22px;
}

.combo select {
  width: 100%;
  height: 22px;
  appearance: none;
  background: #e1e1e1;
  border: 1px solid #adadad;
}

.combo svg {
  position: absolute;
  right: 4px;
  top: 6px;
  pointer-events: none;
}

.configure {
  display: flex;
  grid-column: 2;
  align-items: center;
  justify-content: center;
  gap: 4px;
  height: 26px;
  margin: 1px 1px 0;
  background: #e1e1e1;
  border: 1px solid #adadad;
}

/* taskbar */
.taskbar {
  display: flex;
  gap: 1px;
  height: 40px;
  padding-left: 11px;
  background: #1b2845;
  color: #fff;
}

.taskbar button {
  display: grid;
  width: 48px;
  place-items: center;
}

.taskbar svg {
  width: 24px;
  height: 24px;
}

.gap {
  width: 1px;
}

.running {
  background: linear-gradient(#76b9ed, #76b9ed) bottom / 40px 2px no-repeat;
}

.current {
  background-color: #4a5670;
  background-size: 48px 2px;
}

.clock {
  display: flex;
  flex-direction: column;
  align-items: center;
  margin: 2px -3px 0 auto;
  line-height: 18px;
}
```
